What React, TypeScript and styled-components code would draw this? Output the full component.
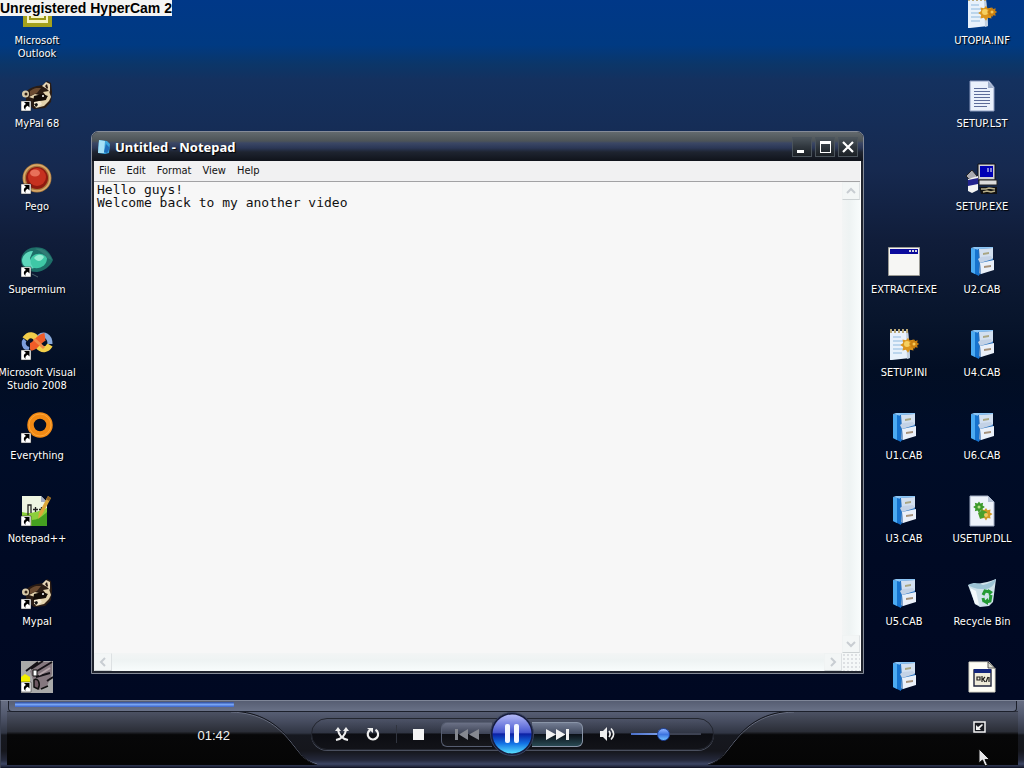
import React from 'react';
import styled, { createGlobalStyle, css } from 'styled-components';

const ui = '"DejaVu Sans Condensed", "DejaVu Sans", sans-serif';

const GlobalStyle = createGlobalStyle`
  * { box-sizing: border-box; }
  body { margin: 0; background: #000820; font-family: ${ui}; }
  button, input, textarea { font: inherit; color: inherit; margin: 0; }
  button { border: 0; padding: 0; background: none; }
  svg { display: block; }
`;

const Screen = styled.div`
  display: flex;
  flex-direction: column;
  height: 100vh;
  overflow: hidden;
  position: relative;
`;

const Watermark = styled.div`
  position: absolute;
  top: 0;
  left: 0;
  z-index: 2;
  height: 16px;
  background: #f4f4f4;
  color: #000;
  font: bold 14px/16px "Liberation Sans", Arial, sans-serif;
  white-space: nowrap;
`;

const Desktop = styled.main`
  flex: 1;
  min-height: 0;
  overflow: hidden;
  display: grid;
  grid-template-columns: 74px 1fr 156px;
  grid-template-rows: 100%;
  padding-right: 3px;
  background: linear-gradient(#003888 0, #003a82 45px, #0b3669 64px, #14315f 80px, #16294f 170px, #101d3a 240px, #08152c 320px, #020e24 370px, #000d28 430px, #000a24 560px, #000822 100%);
`;

const IconGrid = styled.nav`
  display: grid;
  grid-auto-flow: column;
  grid-template-rows: repeat(9, 83px);
  grid-auto-columns: minmax(0, 1fr);
  margin-top: -3px;
`;

const Shortcut = styled.button<{ $row?: number }>`
  display: flex;
  flex-direction: column;
  align-items: center;
  justify-content: flex-start;
  gap: 5px;
  grid-row-start: ${(p) => p.$row ?? 'auto'};
  color: #fff;
  font-size: 11px;
  line-height: 13px;
  text-align: center;
  white-space: pre;
  text-shadow: 1px 1px 1px #000;
`;

/* ---------- Notepad ---------- */

const Window = styled.section`
  display: flex;
  flex-direction: column;
  margin: 131px 1px 26px 17px;
  border: 1px solid #858b98;
  border-radius: 7px 7px 0 0;
  background: #20242e;
  overflow: hidden;
`;

const TitleBar = styled.header`
  display: flex;
  align-items: center;
  gap: 3px;
  height: 29px;
  flex: none;
  padding: 0 5px;
  background: linear-gradient(#636a6e 0, #4c5357 9px, #3b4765 11px, #2b3756 16px, #1e2430 20px, #10131b 100%);
`;

const Title = styled.h1`
  flex: 1;
  margin: 0;
  color: #fff;
  font: bold 13px/16px "Noto Sans", "DejaVu Sans Condensed", sans-serif;
  text-shadow: 1px 1px 1px #000;
`;

const CaptionButton = styled.button`
  width: 20px;
  height: 20px;
  border: 1px solid #4b545c;
  background: linear-gradient(#4b545b, #2f363d 50%, #1b2025);
`;

const Client = styled.div`
  flex: 1;
  min-height: 0;
  display: flex;
  flex-direction: column;
  margin: 0 2px 2px;
  background: #f8f8f8;
  border-right: 1px solid #fff;
`;

const MenuBar = styled.div`
  display: flex;
  height: 21px;
  flex: none;
  background: #f1f1f2;
  border-bottom: 1px solid #a2a2a4;
`;

const MenuItem = styled.button`
  padding: 0 6px 0 5px;
  color: #111;
  font-size: 11px;
  line-height: 18px;
`;

const Editor = styled.div`
  flex: 1;
  min-height: 0;
  display: grid;
  grid-template-columns: 1fr 18px;
  grid-template-rows: 1fr 18px;
`;

const TextArea = styled.textarea`
  border: 0;
  outline: 0;
  padding: 1px 3px;
  resize: none;
  overflow: hidden;
  background: #f7f7f7;
  color: #111;
  font-family: "DejaVu Sans Mono", monospace;
  font-size: 13px;
  line-height: 13px;
`;

const ScrollTrack = styled.div<{ $vertical?: boolean }>`
  display: flex;
  justify-content: space-between;
  flex-direction: ${(p) => (p.$vertical ? 'column' : 'row')};
  background: linear-gradient(${(p) => (p.$vertical ? '90deg, ' : '')}#f3f5f5, #eef3f3 40%, #f8fcfc);
`;

const ScrollButton = styled.button`
  width: 18px;
  height: 18px;
  display: grid;
  place-items: center;
  border: 1px solid #f0f3f3;
  border-right-color: #dde1e3;
  border-bottom-color: #cdd2d4;
  background: #f3f6f6;
`;

const Grip = styled.div`
  background: radial-gradient(#dde0e3 1px, #f5f8f8 1px) 0 0 / 4px 4px;
`;

/* ---------- Media player ---------- */

const Player = styled.footer`
  position: relative;
  flex: none;
  display: flex;
  flex-direction: column;
  height: 68px;
  padding: 0 7px;
  border-top: 1px solid #7f8698;
  border-left: 1px solid #3b4152;
  background: linear-gradient(#666d82 0, #555c71 12px, #474d60 20px, #303543 32px, #16181f 34px, #15161c 50px, #24283a 59px, #3c4563 63px, #1c2136 66px, #0b0e1c 100%);
`;

const Wing = styled.svg<{ $right?: boolean }>`
  position: absolute;
  top: 10px;
  ${(p) => (p.$right ? css`right: 6px; transform: scaleX(-1);` : css`left: 6px;`)}
`;

const Seek = styled.input`
  position: relative;
  appearance: none;
  flex: none;
  width: 100%;
  height: 11px;
  padding: 0 6px;
  border: 1px solid #1c202b;
  border-top: 0;
  border-radius: 0 0 4px 4px;
  background: linear-gradient(#565d72, #697187);
  &::-webkit-slider-runnable-track {
    height: 5px;
    margin-bottom: 3px;
    background: linear-gradient(#2c4a9c, #78a4f4 50%, #3a62c8) 0 0 / 22% 100% no-repeat;
  }
  &::-webkit-slider-thumb { appearance: none; width: 1px; height: 5px; }
`;

const Deck = styled.div`
  position: relative;
  flex: 1;
  display: grid;
  grid-template-columns: 1fr auto 1fr;
`;

const Elapsed = styled.time`
  justify-self: start;
  width: 222px;
  padding-top: 15px;
  text-align: right;
  color: #f2f2f2;
  font: 13px/18px "Liberation Sans", Arial, sans-serif;
`;

const Capsule = styled.div`
  display: flex;
  align-items: center;
  height: 32px;
  margin-top: 6px;
  padding: 0 12px 0 14px;
  border: 1px solid #23262f;
  border-radius: 16px;
  background: linear-gradient(#50566a66, #2f344266 14px, #0c0d12 15px, #121319);
  box-shadow: 0 1px 0 #4a4f5e;
`;

const ToolButton = styled.button`
  display: grid;
  place-items: center;
  width: 31px;
  height: 30px;
`;

const MuteButton = styled(ToolButton)`
  margin-left: 9px;
`;

const Divider = styled.i`
  width: 1px;
  height: 18px;
  margin: 0 6px 0 8px;
  background: #30343f;
`;

const SkipButton = styled.button<{ $next?: boolean }>`
  display: grid;
  place-items: center;
  width: 51px;
  height: 25px;
  border: 1px solid #6d7488;
  ${(p) =>
    p.$next
      ? css`
          border-radius: 0 6px 6px 0;
          border-left: 0;
          border-color: #8a95a8;
          background: linear-gradient(#727c92, #424b60 46%, #0b1118 50%, #294a54);
        `
      : css`
          margin-left: 7px;
          border-radius: 6px 0 0 6px;
          border-right: 0;
          border-color: #565d70;
          background: linear-gradient(#6b7186, #3e4456 46%, #0e0f14 50%, #17181d);
        `}
`;

const PauseButton = styled.button`
  position: relative;
  display: grid;
  place-items: center;
  flex: none;
  width: 44px;
  height: 44px;
  margin: 0 -2px;
  border-radius: 50%;
`;

const Volume = styled.input`
  appearance: none;
  width: 70px;
  height: 14px;
  margin-left: 8px;
  background: linear-gradient(90deg, #4a6fc8, #7fa2ec 45%, #3d4252 50%) 0 6px / 100% 2px no-repeat;
  &::-webkit-slider-thumb {
    appearance: none;
    width: 13px;
    height: 13px;
    border-radius: 50%;
    border: 1px solid #2348a4;
    background: linear-gradient(#8fb4ff, #3e74e0 50%, #6fc0ff);
  }
`;

const FullScreenButton = styled.button`
  align-self: start;
  justify-self: end;
  width: 14px;
  height: 14px;
  margin: 8px 30px 0 0;
`;

const Pointer = styled.svg`
  position: absolute;
  right: 34px;
  bottom: 0;
  z-index: 3;
`;

/* ---------- Desktop pictures, all on a 32 x 32 board ---------- */

const Picture = ({ children, link }: { children: React.ReactNode; link?: boolean }) => (
  <svg width="32" height="32" viewBox="0 0 32 32" aria-hidden="true">
    {children}
    {link && (
      <g>
        <path d="M0 21h10v10H0z" fill="#fff" stroke="#222" strokeWidth=".5" />
        <path d="M3 22h5.500v5.500l-1.800-1.700c-2 1-2.600 2-2.200 4.200-2.500-2.300-1.900-4.700.5-5.900z" fill="#000" />
      </g>
    )}
  </svg>
);

const Outlook = () => (
  <Picture>
    <path d="M2 0h29v30H2z" fill="#a5a21c" />
    <path d="M6 3h21v23H6z" fill="#f6f3c0" />
    <path d="M9 6h15v16H9z" fill="none" stroke="#9b9618" strokeWidth="2" />
    <path d="M13 11h8v2h-8zM13 16h8v2h-8z" fill="#7d7a10" />
  </Picture>
);

const Raccoon = () => (
  <Picture link>
    <path d="M5 12c5-6 12-6 17-7l4-4 4 2 1 9-1 10-6 6-11 1-8-6z" fill="#2a1c14" />
    <path d="M21 6l4-4 4 2 0 8-3-3z" fill="#e6d6b8" />
    <path d="M24 6l2-2 1 4-1 1z" fill="#24150e" />
    <circle cx="4.500" cy="14" r="3.500" fill="#d8caa8" />
    <circle cx="5" cy="14" r="1.500" fill="#33231a" />
    <path d="M9 11c5-4 8-3 11-3l-4 5-7 3z" fill="#6a4a30" />
    <path d="M8 17l6-3 4 1-4 4zM22 12l6-1 2 6-2 4-5 5-8 2-2-4 5-3 7-1 1-3z" fill="#e3d3ad" />
    <path d="M13 16l8-2 6 2-3 4-8 1-4 1z" fill="#120c08" />
    <circle cx="22" cy="16" r="1" fill="#fff" />
    <path d="M13 22l6-1 2 3-4 3-4-1z" fill="#f5ead2" />
    <path d="M13 24l3-1 1 2-2 2z" fill="#111" />
  </Picture>
);

const Pego = () => (
  <Picture link>
    <circle cx="16" cy="15" r="14.500" fill="#a8763c" />
    <circle cx="16" cy="15" r="13" fill="none" stroke="#d9ab6c" strokeWidth="1.500" />
    <circle cx="16" cy="15" r="11" fill="#8e1a10" />
    <circle cx="16" cy="14" r="9" fill="#c63120" />
    <ellipse cx="14" cy="10" rx="5" ry="3.500" fill="#e8705a" />
  </Picture>
);

const Supermium = () => (
  <Picture link>
    <path d="M0 14C1 4 11-1 21 2c6 2 9 7 11 12-3 7-9 11-16 12C7 26 0 22 0 14z" fill="#1d6e68" />
    <path d="M1 14C2 8 7 5 12 5l-3 7 4 10C6 24 1 20 1 14z" fill="#5fd8bd" />
    <path d="M10 12C14 6 23 7 26 12c0 7-6 11-13 10-3-2-4-6-3-10z" fill="#3fc8a6" />
    <path d="M13 12c3-4 8-4 10-1-2 4-6 6-10 1z" fill="#94ecd2" />
    <path d="M14 3c7-2 14 3 17 11l-5-2C23 7 19 5 14 3z" fill="#317c76" />
    <path d="M11 28l6 3" stroke="#48606a" strokeWidth="1" />
  </Picture>
);

const VisualStudio = () => (
  <Picture link>
    <g fill="none" strokeWidth="6">
      <path d="M8 20C2 19 2 13 4 11" stroke="#7d9fdc" strokeWidth="4" />
      <path d="M4 10C8 4 13 6 16 10" stroke="#f0cc4a" />
      <path d="M17 17c4 5 9 4 12-1" stroke="#f4d04a" />
      <path d="M18 8c5-4 11-1 11 7" stroke="#89aadc" strokeWidth="5" />
      <path d="M9 18c6 0 8-9 15-10" stroke="#f05c28" strokeWidth="8" />
      <path d="M13 10l10 9" stroke="#f08a4a" strokeWidth="3" />
    </g>
  </Picture>
);

const Everything = () => (
  <Picture link>
    <circle cx="19" cy="13" r="9.500" fill="none" stroke="#f28a14" strokeWidth="6.500" />
    <circle cx="19" cy="13" r="11" fill="none" stroke="#ffa638" strokeWidth="1" />
  </Picture>
);

const NotepadPlus = () => (
  <Picture link>
    <path d="M1 1h19l6 6v24H1z" fill="#eef5e2" />
    <path d="M1 17c9 3 16-1 25-4v18H1z" fill="#8ccf3c" />
    <path d="M11 25c5 0 10-3 15-8v14H11z" fill="#45a020" />
    <path d="M20 1v6h6z" fill="#a5acc0" />
    <path d="M7 20V10h3v8M12 14.500h5M14.500 12v5M18 14.500h5M20.500 12v5" fill="none" stroke="#222" strokeWidth="1.300" />
    <path d="M27 1l3 2-9 17-4 4 1-6z" fill="#dca83a" />
    <path d="M27 1l3 2-2 3-3-2z" fill="#8d6020" />
  </Picture>
);

const Camera = () => (
  <Picture link>
    <path d="M0 0h32v32H0z" fill="#a9a9a9" />
    <path d="M9 10L21 1h10v12l-5 12-8 4-5-7z" fill="#85787f" />
    <path d="M5 10L17 1M10 8L22 0M16 10L31 1M15 16l14-4M26 20l6-4" stroke="#151217" strokeWidth="2" />
    <path d="M18 14l11-7" stroke="#b5a6ab" strokeWidth="2" />
    <path d="M13 19c4-3 7 4 4 9l-4-2zM20 28l7-3" fill="#6c5862" stroke="#111" strokeWidth="1.500" />
    <path d="M12 9h4v6h-4z" fill="#fff" stroke="#111" />
    <path d="M0 16l4-3 5 3v5H0z" fill="#f4f000" />
  </Picture>
);

const gear = 'M0-6l1.500 2.200L4.600-4.600 4-1.600 6.500 0 4 1.700 4.600 4.600 1.600 4 0 6.500-1.700 4-4.600 4.600-4 1.600-6.500 0-4-1.700-4.600-4.600-1.600-4z';

const Config = () => (
  <Picture>
    <path d="M2 2h18l2 27-18 2H2z" fill="#e8f1fb" />
    <path d="M20 2l2 27-3 1-1-27z" fill="#c3d0e0" />
    <path d="M3 0v4M7 0v4M11 0v4M15 0v4M19 0v4" stroke="#b9a878" strokeWidth="2" />
    <path d="M5 8h8M5 12h11M5 16h9M5 20h11M5 24h9" stroke="#8fb9de" />
    <path d={gear} transform="translate(20 16) scale(1.200)" fill="#dc951c" />
    <circle cx="19" cy="15" r="3" fill="#f6d060" />
    <path d={gear} transform="translate(26 15) scale(.8)" fill="#c97f10" />
    <circle cx="26" cy="15" r="1.500" fill="#f4c858" />
  </Picture>
);

const TextFile = () => (
  <Picture>
    <path d="M4 1h19l5 6v24H4z" fill="#eaf1fc" stroke="#8b9bc0" />
    <path d="M22 1v7h6z" fill="#a0b0cc" />
    <path d="M8 8.500h13M8 11.500h16M8 14.500h16M8 17.500h16M8 20.500h16M8 23.500h16M8 26.500h13" stroke="#5c6c9a" />
  </Picture>
);

const Installer = () => (
  <Picture>
    <path d="M12 1h17v16H12z" fill="#d0d0d4" stroke="#111" />
    <path d="M14 3h13v11H14z" fill="#0000b4" />
    <path d="M22 5v4M25 5v4" stroke="#fff" />
    <path d="M13 17h18v5H13z" fill="#dcdcdc" stroke="#222" />
    <path d="M13 24h18v7H15z" fill="#111" />
    <path d="M15 26h5l3-1 6 1M17 29l4-1 4 1 4-1" fill="none" stroke="#b9b08a" strokeWidth="1.500" />
    <path d="M0 13l6-6 5 6-2 3H3z" fill="#aaaab0" stroke="#222" />
    <path d="M2 16l10-3v14l-6 3-4-2z" fill="#f4f4f4" />
    <path d="M2 17l10-2v6l-10 2z" fill="#23238c" />
  </Picture>
);

const Program = () => (
  <Picture>
    <path d="M.5 1.500h31v28H.5z" fill="#f6f6f4" stroke="#9a9a94" />
    <path d="M2 3h28v5H2z" fill="#0a0a9c" />
    <path d="M21 4h2v2h-2zM24 4h2v2h-2zM27 4h2v2h-2z" fill="#d8d8e0" />
  </Picture>
);

const Cabinet = () => (
  <Picture>
    <path d="M5 2l8 1v27l-8-4z" fill="#1673cf" />
    <path d="M5 2l4 1v25l-4-2z" fill="#4cabf2" />
    <path d="M5 2l3-1h19v2l-14 1z" fill="#8cc6f6" />
    <path d="M12 3l15-1v20l-14 7z" fill="#2470c0" />
    <path d="M13 3l14-1v10l-13 3z" fill="#d3e0f0" />
    <path d="M17 7l6-1v2l-6 1z" fill="#a9a684" />
    <path d="M12 13l3-2 10-1 2 3-13 4z" fill="#c3d2e6" />
    <path d="M14 17l14-3v10l-13 4z" fill="#eaf0f9" />
    <path d="M14 17l-1 10 2 1z" fill="#8ba6c8" />
    <path d="M18 20l7-1v2l-7 1z" fill="#a5917a" />
  </Picture>
);

const Library = () => (
  <Picture>
    <path d="M4 1h18l6 6v24H4z" fill="#eef3fb" stroke="#a2aec4" />
    <path d="M22 1v6h6z" fill="#b3c0d4" />
    <path d={gear} transform="translate(13 12) scale(.9)" fill="#3c9a2c" />
    <circle cx="13" cy="12" r="1.500" fill="#b6e08c" />
    <path d={gear} transform="translate(20 19) scale(1)" fill="#d09a24" />
    <path d="M12 18l4-3 5 2-2 5-5 2z" fill="#4aa02c" />
    <circle cx="20" cy="20" r="2" fill="#f0c860" />
  </Picture>
);

const Bin = () => (
  <Picture>
    <path d="M2 7c7-1 15-1 28-6l-3 23-4 4-9 1-5-3z" fill="#cfe2ea" />
    <path d="M2 7c6-3 10-2 15 0 5-1 9-4 13-6-2 7-6 11-15 10C10 11 5 9 2 7z" fill="#9cc3d4" />
    <path d="M4 10l6 3 3 14-4-1z" fill="#f3fafc" />
    <g fill="none" stroke="#239a34" strokeWidth="3">
      <path d="M17 17l2-4 5 1M25 17l-1 6-4 1M18 24l-1-4" />
    </g>
    <path d="M22 11l5 3-4 4zM22 20v7l-5-3z" fill="#239a34" />
  </Picture>
);

const Component = () => (
  <Picture>
    <path d="M3 1h20l6 6v24H3z" fill="#fffef6" stroke="#d8d6c8" />
    <path d="M22 1v6h7z" fill="#dcdcd0" stroke="#333" strokeWidth=".8" />
    <path d="M8 9h17v16H8z" fill="#f0ecda" stroke="#20243c" strokeWidth="1.400" />
    <path d="M8 8h17v4H8z" fill="#14267c" />
    <path d="M11 16h3v3h-3zM16 15v6M19 16l-2 2 2 3M22 16l-2 5M23 16v5" fill="none" stroke="#22201e" strokeWidth="1.200" />
  </Picture>
);

const leftIcons = [
  { label: 'Microsoft\nOutlook', Art: Outlook },
  { label: 'MyPal 68', Art: Raccoon },
  { label: 'Pego', Art: Pego },
  { label: 'Supermium', Art: Supermium },
  { label: 'Microsoft Visual\nStudio 2008', Art: VisualStudio },
  { label: 'Everything', Art: Everything },
  { label: 'Notepad++', Art: NotepadPlus },
  { label: 'Mypal', Art: Raccoon },
  { label: '', name: 'Camera', Art: Camera },
];

const rightIcons = [
  { label: 'EXTRACT.EXE', Art: Program, row: 4 },
  { label: 'SETUP.INI', Art: Config, row: 5 },
  { label: 'U1.CAB', Art: Cabinet, row: 6 },
  { label: 'U3.CAB', Art: Cabinet, row: 7 },
  { label: 'U5.CAB', Art: Cabinet, row: 8 },
  { label: '', name: 'Cabinet', Art: Cabinet, row: 9 },
  { label: 'UTOPIA.INF', Art: Config, row: 1 },
  { label: 'SETUP.LST', Art: TextFile, row: 2 },
  { label: 'SETUP.EXE', Art: Installer, row: 3 },
  { label: 'U2.CAB', Art: Cabinet, row: 4 },
  { label: 'U4.CAB', Art: Cabinet, row: 5 },
  { label: 'U6.CAB', Art: Cabinet, row: 6 },
  { label: 'USETUP.DLL', Art: Library, row: 7 },
  { label: 'Recycle Bin', Art: Bin, row: 8 },
  { label: '', name: 'Component', Art: Component, row: 9 },
];

const Chevron = ({ turn }: { turn: number }) => (
  <svg width="12" height="12" viewBox="0 0 12 12" aria-hidden="true">
    <path d="M2 8l4-4 4 4" transform={`rotate(${turn} 6 6)`} fill="none" stroke="#c8cdd2" strokeWidth="2" />
  </svg>
);

const WingShape = ({ right }: { right?: boolean }) => {
  const id = right ? 'wing-right' : 'wing-left';
  return (
    <Wing $right={right} width="310" height="54" viewBox="0 0 310 54" aria-hidden="true">
      <defs>
        <linearGradient id={id} x1="0" y1="0" x2="0" y2="1">
          <stop offset="0" stopColor="#4d5365" />
          <stop offset=".38" stopColor="#2b2e37" />
          <stop offset=".44" stopColor="#070708" />
          <stop offset="1" stopColor="#050505" />
        </linearGradient>
      </defs>
      <path d="M0 0h224c30 1 46 13 60 30 9 11 13 20 26 24H0z" fill={`url(#${id})`} />
      <path d="M224 1c30 1 46 13 60 30 9 11 13 19 26 22" fill="none" stroke="#6a7083" />
      <path d="M0 0h224c30 1 46 13 60 30 9 11 13 20 26 24" fill="none" stroke="#12141b" />
    </Wing>
  );
};

export default function App() {
  return (
    <Screen>
      <GlobalStyle />
      <Watermark>Unregistered HyperCam 2</Watermark>
      <Desktop>
        <IconGrid aria-label="Programs">
          {leftIcons.map(({ label, name, Art }, i) => (
            <Shortcut key={i} aria-label={name}>
              <Art />
              {label}
            </Shortcut>
          ))}
        </IconGrid>

        <Window>
          <TitleBar>
            <svg width="15" height="16" viewBox="0 0 15 16" aria-hidden="true">
              <path d="M2 1l8 1 3 3-1 9-4 1-7-1z" fill="#3aa4dc" />
              <path d="M2 1l6 1-1 12-6 0z" fill="#a4e0f6" />
              <path d="M9 5l4 4-3 5-3-1z" fill="#1f6cb8" />
            </svg>
            <Title>Untitled - Notepad</Title>
            <CaptionButton aria-label="Minimize">
              <svg width="18" height="18"><path d="M4 12h7v3H4z" fill="#fff" /></svg>
            </CaptionButton>
            <CaptionButton aria-label="Maximize">
              <svg width="18" height="18"><path d="M4 3h11v12H4zM5 6v8h9V6z" fill="#fff" fillRule="evenodd" /></svg>
            </CaptionButton>
            <CaptionButton aria-label="Close">
              <svg width="18" height="18"><path d="M4 4l10 10M14 4L4 14" stroke="#fff" strokeWidth="2.200" /></svg>
            </CaptionButton>
          </TitleBar>
          <Client>
            <MenuBar>
              {['File', 'Edit', 'Format', 'View', 'Help'].map((m) => (
                <MenuItem key={m}>{m}</MenuItem>
              ))}
            </MenuBar>
            <Editor>
              <TextArea aria-label="Document" spellCheck={false} defaultValue={'Hello guys!\nWelcome back to my another video'} />
              <ScrollTrack $vertical>
                <ScrollButton aria-label="Scroll up"><Chevron turn={0} /></ScrollButton>
                <ScrollButton aria-label="Scroll down"><Chevron turn={180} /></ScrollButton>
              </ScrollTrack>
              <ScrollTrack>
                <ScrollButton aria-label="Scroll left"><Chevron turn={-90} /></ScrollButton>
                <ScrollButton aria-label="Scroll right"><Chevron turn={90} /></ScrollButton>
              </ScrollTrack>
              <Grip />
            </Editor>
          </Client>
        </Window>

        <IconGrid aria-label="Files">
          {rightIcons.map(({ label, name, Art, row }, i) => (
            <Shortcut key={i} $row={row} aria-label={name}>
              <Art />
              {label}
            </Shortcut>
          ))}
        </IconGrid>
      </Desktop>

      <Player>
        <WingShape />
        <WingShape right />
        <Seek type="range" aria-label="Seek" min={0} max={100} defaultValue={22} />
        <Deck>
          <Elapsed>01:42</Elapsed>
          <Capsule>
            <ToolButton aria-label="Shuffle">
              <svg width="14" height="14" viewBox="0 0 14 14">
                <path d="M1 13C6 12 10 9 11 3M13 13C8 12 4 9 3 3" fill="none" stroke="#eee" strokeWidth="2" />
                <path d="M0 4l3-4 3 4zM8 4l3-4 3 4z" fill="#eee" />
              </svg>
            </ToolButton>
            <ToolButton aria-label="Repeat">
              <svg width="14" height="14" viewBox="0 0 14 14">
                <path d="M9.500 2.800A5.200 5.200 0 1 1 4 3" fill="none" stroke="#eee" strokeWidth="2.200" />
                <path d="M1 1h6v5z" fill="#eee" />
              </svg>
            </ToolButton>
            <Divider />
            <ToolButton aria-label="Stop">
              <svg width="11" height="11"><path d="M0 0h11v11H0z" fill="#f4f4f4" /></svg>
            </ToolButton>
            <SkipButton aria-label="Previous">
              <svg width="25" height="11" viewBox="0 0 25 11">
                <path d="M0 0h3v11H0zM13 0v11L4 5.500zM24 0v11l-10-5.500z" fill="#858890" />
              </svg>
            </SkipButton>
            <PauseButton aria-label="Pause">
              <svg width="44" height="44" viewBox="0 0 44 44">
                <defs>
                  <linearGradient id="orb" x1="0" y1="0" x2="0" y2="1">
                    <stop offset="0" stopColor="#b3b9f6" />
                    <stop offset=".46" stopColor="#4858d0" />
                    <stop offset=".5" stopColor="#0c20a4" />
                    <stop offset=".74" stopColor="#1272e4" />
                    <stop offset="1" stopColor="#58e0ff" />
                  </linearGradient>
                </defs>
                <circle cx="22" cy="22" r="21.500" fill="#161c3c" stroke="#3c4560" />
                <circle cx="22" cy="22" r="19.500" fill="url(#orb)" />
                <rect x="15" y="12" width="5" height="19" rx="2" fill="#f4f6ff" />
                <rect x="24" y="12" width="5" height="19" rx="2" fill="#f4f6ff" />
              </svg>
            </PauseButton>
            <SkipButton $next aria-label="Next">
              <svg width="25" height="11" viewBox="0 0 25 11">
                <path d="M21 0h3v11h-3zM11 0v11l9.500-5.500zM1 0v11l10-5.500z" fill="#f2f2f2" />
              </svg>
            </SkipButton>
            <MuteButton aria-label="Mute">
              <svg width="15" height="14" viewBox="0 0 15 14">
                <path d="M0 4h3l4-4v14l-4-4H0z" fill="#eee" />
                <path d="M9 4c1.500 2 1.500 4 0 6M11 1.500c3.500 3.500 3.500 7.500 0 11" fill="none" stroke="#eee" strokeWidth="1.700" />
              </svg>
            </MuteButton>
            <Volume type="range" aria-label="Volume" min={0} max={100} defaultValue={46} />
          </Capsule>
          <FullScreenButton aria-label="Exit full screen">
            <svg width="13" height="12" viewBox="0 0 13 12">
              <path d="M1 1h11v10H1z" fill="#181a20" stroke="#f2f2f2" strokeWidth="1.500" />
              <path d="M3 4v5h5L6.500 7.500 10 4 9 3 5 6z" fill="#f2f2f2" />
            </svg>
          </FullScreenButton>
        </Deck>
      </Player>

      <Pointer width="12" height="20" viewBox="0 0 12 20" aria-hidden="true">
        <path d="M1 1v14l3.500-3L7 18l2.500-1L7 11.500h4.500z" fill="#e8e8ea" stroke="#111" />
      </Pointer>
    </Screen>
  );
}
